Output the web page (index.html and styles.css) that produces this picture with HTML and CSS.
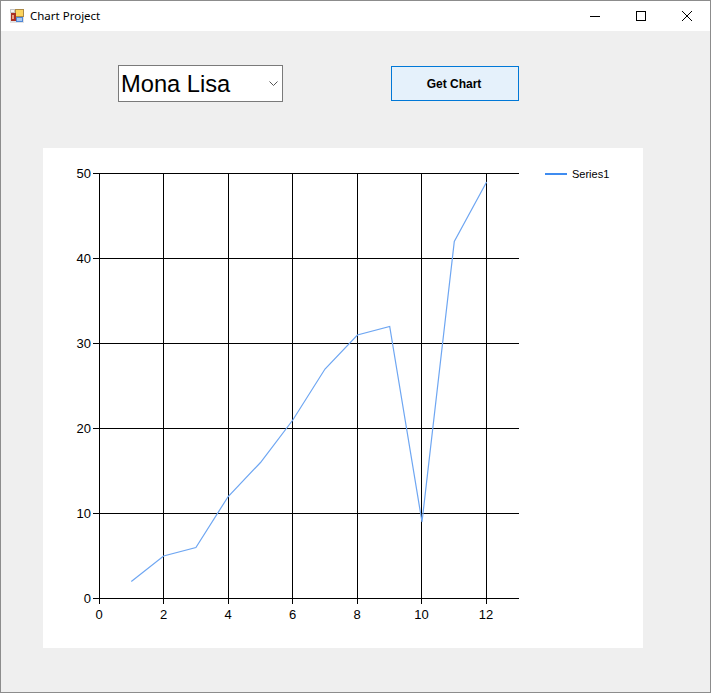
FILE: index.html
```html
<!DOCTYPE html>
<html lang="en">
<head>
<meta charset="utf-8">
<title>Chart Project</title>
<link rel="stylesheet" href="styles.css">
</head>
<body>
<div class="window">
  <header class="titlebar">
    <svg class="app-icon" width="14" height="14" viewBox="0 0 14 14" shape-rendering="crispEdges">
      <rect x="0" y="0" width="14" height="14" fill="#e2e2e2"/>
      <rect x="0" y="0" width="5" height="4" fill="#c4c4c4"/>
      <rect x="1" y="1" width="3" height="2" fill="#f4f4f4"/>
      <rect x="5" y="0" width="9" height="8" fill="#ad8a45"/>
      <rect x="6" y="1" width="7" height="6" fill="#fbd35e"/>
      <rect x="1" y="4" width="5" height="8" fill="#a92e22"/>
      <rect x="2" y="6" width="2" height="4" fill="#e8a080"/>
      <rect x="6" y="8" width="7" height="5" fill="#4f86d6"/>
      <rect x="7" y="9" width="5" height="3" fill="#a8c8f0"/>
    </svg>
    <span class="title">Chart Project</span>
    <div class="caption-buttons">
      <svg class="cap" width="46" height="30" viewBox="0 0 46 30" shape-rendering="crispEdges"><rect x="18" y="15" width="10" height="1" fill="#000"/></svg>
      <svg class="cap" width="46" height="30" viewBox="0 0 46 30" shape-rendering="crispEdges"><rect x="18.5" y="10.5" width="9" height="9" fill="none" stroke="#000"/></svg>
      <svg class="cap" width="46" height="30" viewBox="0 0 46 30"><path d="M18 10l10 10M28 10l-10 10" fill="none" stroke="#000" stroke-width="1"/></svg>
    </div>
  </header>
  <main class="form">
    <div class="controls">
      <div class="combo">
        <span class="combo-value">Mona Lisa</span>
        <svg class="chevron" width="9" height="5" viewBox="0 0 9 5"><path d="M.5.5L4.5 4.5 8.5.5" fill="none" stroke="#555" stroke-width="1"/></svg>
      </div>
      <button class="get-chart" type="button">Get Chart</button>
    </div>
    <svg class="chart" width="600" height="500" viewBox="0 0 600 500">
      <g class="grid">
        <path d="M50 25.5H476M50 110.5H476M50 195.5H476M50 280.5H476M50 365.5H476M50 450.5H476"/>
        <path d="M56.5 25V456M120.5 25V456M185.5 25V456M249.5 25V456M314.5 25V456M378.5 25V456M443.5 25V456"/>
      </g>
      <polyline class="series" points="88.3,433.5 120.6,408 152.9,399.5 185.2,348.5 217.5,314.5 249.8,272 282,221 314.4,187 346.7,178.5 379,374 411.3,93.5 443.6,34"/>
      <g class="y-labels">
        <text x="48" y="30">50</text>
        <text x="48" y="115">40</text>
        <text x="48" y="200">30</text>
        <text x="48" y="285">20</text>
        <text x="48" y="370">10</text>
        <text x="48" y="455">0</text>
      </g>
      <g class="x-labels">
        <text x="56" y="471">0</text>
        <text x="120.5" y="471">2</text>
        <text x="185" y="471">4</text>
        <text x="249.5" y="471">6</text>
        <text x="314" y="471">8</text>
        <text x="378.5" y="471">10</text>
        <text x="443" y="471">12</text>
      </g>
      <rect class="legend-key" x="502" y="25" width="22" height="2"/>
      <text class="legend-text" x="529" y="30">Series1</text>
    </svg>
  </main>
</div>
</body>
</html>
```
FILE: styles.css
```css
* { box-sizing: border-box; }
html, body { margin: 0; padding: 0; }
body { width: 711px; height: 693px; overflow: hidden; background: #efefef; }
.window {
  width: 711px;
  height: 693px;
  display: flex;
  flex-direction: column;
  border: 1px solid #8c8c8c;
  background: #efefef;
}
.titlebar {
  height: 30px;
  flex: none;
  display: flex;
  align-items: center;
  background: #fff;
  padding-left: 9px;
}
.app-icon { flex: none; margin-top: -1px; }
.title {
  margin-left: 6px;
  margin-top: -1px;
  font: 11.5px "Noto Sans", "Open Sans", sans-serif;
  color: #000;
}
.caption-buttons { margin-left: auto; display: flex; }
.cap { display: block; }
.form { flex: 1; padding: 34px 0 0 42px; }
.controls { display: flex; align-items: center; padding-left: 75px; height: 37px; }
.combo {
  width: 165px;
  height: 37px;
  border: 1px solid #7a7a7a;
  background: #fff;
  display: flex;
  align-items: center;
  padding: 2px 4px 0 2px;
}
.combo-value { font: 23.7px "Liberation Sans", Arial, sans-serif; color: #000; }
.chevron { margin-left: auto; margin-top: -2px; }
.get-chart {
  margin-left: 108px;
  width: 128px;
  height: 35px;
  padding: 0 2px 0 0;
  border: 1px solid #0078d7;
  border-radius: 0;
  background: #e5f1fb;
  font: bold 12px "Liberation Sans", Arial, sans-serif;
  color: #000;
}
.chart { display: block; margin-top: 46px; background: #fff; }
.grid path { fill: none; stroke: #000; stroke-width: 1; }
.series { fill: none; stroke: #6ea6f2; stroke-width: 1.2; }
.y-labels text { font: 13px "Liberation Sans", Arial, sans-serif; text-anchor: end; fill: #000; }
.x-labels text { font: 13px "Liberation Sans", Arial, sans-serif; text-anchor: middle; fill: #000; }
.legend-key { fill: #3f8cf0; }
.legend-text { font: 11px "Liberation Sans", Arial, sans-serif; fill: #000; }
```
